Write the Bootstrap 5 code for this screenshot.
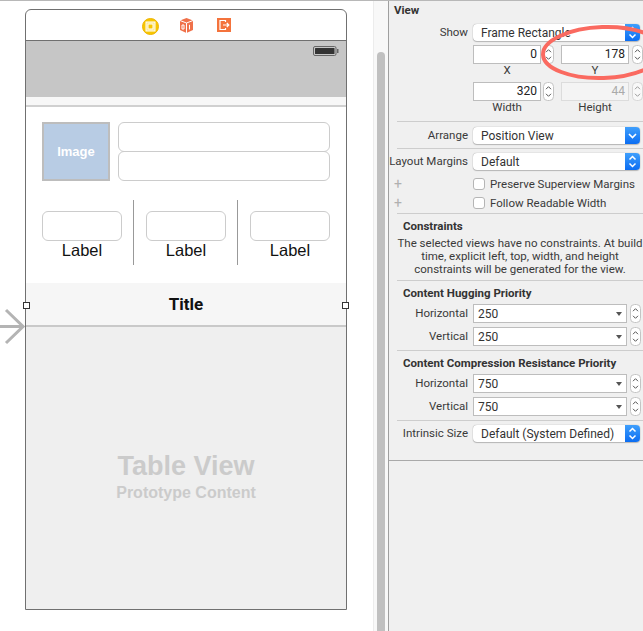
<!DOCTYPE html>
<html lang="en">
<head>
<meta charset="utf-8">
<title>Storyboard</title>
<link href="https://cdn.jsdelivr.net/npm/bootstrap@5.3.0/dist/css/bootstrap.min.css" rel="stylesheet">
<style>
html,body{height:631px;overflow:hidden}
body{background:#fff;border-top:1px solid #b8b8b8;font-family:Roboto,"Liberation Sans",sans-serif;font-size:11.5px;color:#333;position:relative}
.stage{width:373px;flex:none;padding:8px 0 0 25px}
.device{width:322px;height:601px;border:1px solid #707070;border-radius:6px 6px 0 0;position:relative}
.scene-bar{height:31px;border-bottom:1px solid #707070;position:relative}
.scene-ico{position:absolute;top:8px}
.status{height:56px;background:#c6c6c6;position:relative}
.battery{position:absolute;left:287px;top:5px}
.nav-gap{height:8px;background:#f7f7f7}
.nav-line{height:2px;background:#d0d0d0}
.cell{height:176px;padding:15px 16px 0}
.pic{width:68px;height:59px;flex:none;border:2px solid #bdbdbd;outline:0;background:#b8cce4;color:#fff;font:bold 13px "Liberation Sans",sans-serif;box-shadow:inset 0 0 0 0 #fff}
.tf{border:1px solid #ccc;border-radius:6px;background:#fff}
.tf-wide{height:30px}
.tf-wide+.tf-wide{margin-top:-1px}
.trio{margin-top:19px;height:65px}
.trio-item{width:80px;flex:none;padding-top:11px;text-align:center}
.tf-small{height:30px}
.lab{font-family:"Liberation Sans",sans-serif;font-size:16.5px;color:#111;line-height:19px;margin-top:0}
.vsep{width:1px;background:#999;flex:none;margin:0 12px 0 11px}
.vsep+.trio-item{margin-left:0}
.title-bar{height:44px;background:#f6f6f6;border-bottom:2px solid #c9c9c9;font:bold 17px Roboto,"Liberation Sans",sans-serif;color:#111}
.table-area{height:282px;background:#efefef;text-align:center;color:#cbcbcb;font-family:"Liberation Sans",sans-serif;font-weight:bold;padding-top:123px}
.tv1{font-size:27px;line-height:32px}
.tv2{font-size:16px;line-height:20px;margin-top:1px}
.handle{position:absolute;width:7px;height:7px;background:#fff;border:1px solid #333;top:292px}
.entry{position:absolute;left:-26px;top:298px}
.scroll-strip{width:15px;flex:none;background:#f8f8f8;border-left:1px solid #ececec;position:relative;padding:51px 3px 0 3px}
.thumb{width:8px;height:600px;background:#c0c0c0;border-radius:4px 4px 0 0}
.insp{flex:1;background:#f0f0f0;border-left:1px solid #9f9f9f;color:#3a3a3a;height:630px}
.insp-h{font-weight:bold;color:#333;line-height:14px;font-size:11.5px}
.sep{height:1px;background:#cdcdcd;margin:0 3px 0 8px}
.sec{padding-right:3px}
.rw{display:flex;align-items:center}
.rl{width:79px;flex:none;text-align:right;margin-right:5px;white-space:nowrap}
.sel{height:17px;width:167px;flex:none;background:#fff;border-radius:4px;box-shadow:0 0 1px #888,0 1px 1px #bbb;display:flex;align-items:center;padding-left:8px;position:relative;overflow:hidden;font-size:12px;color:#333}
.blue{position:absolute;right:0;top:0;bottom:0;width:15px;background:linear-gradient(#3f9ffc,#0b6df2);display:flex;align-items:center;justify-content:center}
.fld{height:19px;background:#fff;border:1px solid #bdbdbd;text-align:right;padding-right:3px;line-height:17px;font-size:12px;color:#222}
.fld-n{width:68px;flex:none}
.fld-off{border-color:#dcdcdc;color:#aaa;background:#f4f4f4}
.step{width:11px;height:19px;flex:none;margin-left:2px;display:block}
.cap{width:68px;text-align:center;line-height:12px}
.chk{width:12px;height:12px;flex:none;background:#fff;border:1px solid #b5b5b5;border-radius:3px;margin-right:5px}
.plus{color:#b0b0b0;text-align:left;padding-left:5px;font-size:14px;line-height:12px}
.ddf{width:154px;flex:none;height:19px;background:#fff;border:1px solid #bdbdbd;padding-left:4px;display:flex;align-items:center;justify-content:space-between;padding-right:4px;font-size:12px;color:#333;margin-right:1px}
.tri{width:0;height:0;border-left:3.5px solid transparent;border-right:3.5px solid transparent;border-top:4px solid #555}
.note{text-align:center;line-height:13px;margin:4px 0 4px 8px;padding-right:0}
.ring{position:absolute;left:530px;top:15px}
</style>
</head>
<body>
<svg width="0" height="0" class="position-absolute">
  <symbol id="ud" viewBox="0 0 15 17"><path d="M4.5 6.5 7.5 3.5 10.5 6.5M4.5 10.5 7.5 13.5 10.5 10.5" fill="none" stroke="#fff" stroke-width="1.5"/></symbol>
  <symbol id="dn" viewBox="0 0 15 17"><path d="M4 7 7.5 10.5 11 7" fill="none" stroke="#fff" stroke-width="1.6"/></symbol>
  <symbol id="st" viewBox="0 0 11 19"><rect x=".5" y=".5" width="10" height="18" rx="4" fill="#fff" stroke="#c4c4c4"/><path d="M3 7.2 5.5 4.7 8 7.2M3 11.8 5.5 14.3 8 11.8" fill="none" stroke="#555" stroke-width="1"/></symbol>
</svg>
<div class="d-flex">
  <div class="stage">
    <div class="device">
      <div class="scene-bar">
        <svg class="scene-ico" style="left:116px" width="17" height="17" viewBox="0 0 17 17"><circle cx="8.5" cy="8.5" r="8" fill="#f7c600"/><circle cx="8.5" cy="8.5" r="8" fill="none" stroke="#eeb400"/><rect x="4" y="4" width="9" height="9" fill="#fbe27a" stroke="#fff" stroke-width="1"/><rect x="6" y="6" width="5" height="5" fill="#f7c600" stroke="#fff" stroke-width="1"/></svg>
        <svg class="scene-ico" style="left:153px" width="15" height="15" viewBox="0 0 15 15"><path d="M7.5 0 14 2.5V12L7.5 15 1 12V2.5Z" fill="#f0714a"/><path d="M1 2.5 7.5 5 14 2.5M7.5 5V15" fill="none" stroke="#fff" stroke-width="1"/><path d="M3 7h2v4H3ZM10.5 6.8V11.5" fill="none" stroke="#fff" stroke-width="1"/></svg>
        <svg class="scene-ico" style="left:191px" width="14" height="14" viewBox="0 0 14 14"><rect width="14" height="14" fill="#f4733c"/><path d="M8.5 4V2.5H3V11.5H8.5V10" fill="none" stroke="#fff" stroke-width="1.2"/><path d="M6 7H11.5M9.8 5 11.8 7 9.8 9" fill="none" stroke="#fff" stroke-width="1.2"/></svg>
      </div>
      <div class="status">
        <svg class="battery" width="26" height="10" viewBox="0 0 26 10"><rect x=".5" y=".5" width="22.5" height="9" rx="1.5" fill="#c6c6c6" stroke="#666"/><rect x="2" y="2" width="19.5" height="6" rx=".5" fill="#333"/><rect x="24" y="3" width="1.5" height="4" fill="#666"/></svg>
      </div>
      <div class="nav-gap"></div>
      <div class="nav-line"></div>
      <div class="cell">
        <div class="d-flex">
          <div class="pic d-flex align-items-center justify-content-center">Image</div>
          <div class="flex-grow-1 ms-2">
            <div class="tf tf-wide"></div>
            <div class="tf tf-wide"></div>
          </div>
        </div>
        <div class="trio d-flex">
          <div class="trio-item"><div class="tf tf-small"></div><div class="lab">Label</div></div>
          <div class="vsep"></div>
          <div class="trio-item"><div class="tf tf-small"></div><div class="lab">Label</div></div>
          <div class="vsep"></div>
          <div class="trio-item"><div class="tf tf-small"></div><div class="lab">Label</div></div>
        </div>
      </div>
      <div class="title-bar d-flex align-items-center justify-content-center">Title</div>
      <div class="table-area">
        <div class="tv1">Table View</div>
        <div class="tv2">Prototype Content</div>
      </div>
      <span class="handle" style="left:-3px"></span>
      <span class="handle" style="left:316px"></span>
      <svg class="entry" width="25" height="38" viewBox="0 0 25 38"><path d="M0 18.5H22M6 2 23 18.5 6 35" fill="none" stroke="#b4b4b4" stroke-width="3"/></svg>
    </div>
  </div>
  <div class="scroll-strip"><div class="thumb"></div></div>
  <div class="insp">
    <div class="sec" style="height:120px">
      <div class="insp-h" style="padding:2px 0 0 5px">View</div>
      <div class="rw" style="margin-top:7px"><div class="rl">Show</div><div class="sel">Frame Rectangle<span class="blue"><svg width="15" height="17"><use href="#ud"/></svg></span></div></div>
      <div class="rw" style="margin-top:4px;margin-left:84px">
        <div class="fld fld-n">0</div><svg class="step"><use href="#st"/></svg>
        <div class="fld fld-n" style="margin-left:7px">178</div><svg class="step" style="margin-left:3px"><use href="#st"/></svg>
      </div>
      <div class="d-flex" style="margin-left:84px"><div class="cap">X</div><div class="cap" style="margin-left:20px">Y</div></div>
      <div class="rw" style="margin-top:6px;margin-left:84px">
        <div class="fld fld-n">320</div><svg class="step"><use href="#st"/></svg>
        <div class="fld fld-n fld-off" style="margin-left:7px">44</div><svg class="step" style="margin-left:3px;opacity:.55"><use href="#st"/></svg>
      </div>
      <div class="d-flex" style="margin-left:84px"><div class="cap">Width</div><div class="cap" style="margin-left:20px">Height</div></div>
    </div>
    <div class="sep"></div>
    <div class="sec" style="height:26px;padding-top:5px">
      <div class="rw"><div class="rl">Arrange</div><div class="sel">Position View<span class="blue"><svg width="15" height="17"><use href="#dn"/></svg></span></div></div>
    </div>
    <div class="sep"></div>
    <div class="sec" style="height:64px;padding-top:4px">
      <div class="rw"><div class="rl">Layout Margins</div><div class="sel">Default<span class="blue"><svg width="15" height="17"><use href="#ud"/></svg></span></div></div>
      <div class="rw" style="margin-top:8px;height:12px"><div class="rl plus">+</div><span class="chk"></span><span class="text-nowrap">Preserve Superview Margins</span></div>
      <div class="rw" style="margin-top:7px;height:12px"><div class="rl plus">+</div><span class="chk"></span><span>Follow Readable Width</span></div>
    </div>
    <div class="sep"></div>
    <div class="sec" style="height:66px;padding-top:5px">
      <div class="insp-h" style="padding-left:14px">Constraints</div>
      <div class="note">The selected views have no constraints. At build<br>time, explicit left, top, width, and height<br>constraints will be generated for the view.</div>
    </div>
    <div class="sep"></div>
    <div class="sec" style="height:69px;padding-top:5px">
      <div class="insp-h" style="padding-left:14px">Content Hugging Priority</div>
      <div class="rw" style="margin-top:4px"><div class="rl">Horizontal</div><div class="ddf">250<span class="tri"></span></div><svg class="step"><use href="#st"/></svg></div>
      <div class="rw" style="margin-top:4px"><div class="rl">Vertical</div><div class="ddf">250<span class="tri"></span></div><svg class="step"><use href="#st"/></svg></div>
    </div>
    <div class="sep"></div>
    <div class="sec" style="height:69px;padding-top:5px">
      <div class="insp-h" style="padding-left:14px">Content Compression Resistance Priority</div>
      <div class="rw" style="margin-top:4px"><div class="rl">Horizontal</div><div class="ddf">750<span class="tri"></span></div><svg class="step"><use href="#st"/></svg></div>
      <div class="rw" style="margin-top:4px"><div class="rl">Vertical</div><div class="ddf">750<span class="tri"></span></div><svg class="step"><use href="#st"/></svg></div>
    </div>
    <div class="sep"></div>
    <div class="sec" style="height:39px;padding-top:4px">
      <div class="rw"><div class="rl">Intrinsic Size</div><div class="sel">Default (System Defined)<span class="blue"><svg width="15" height="17"><use href="#ud"/></svg></span></div></div>
    </div>
    <div style="height:1px;background:#a9a9a9"></div>
  </div>
</div>
<svg class="ring" width="113" height="72" viewBox="530 15 113 72"><ellipse cx="603" cy="51.5" rx="60" ry="25.5" transform="rotate(-2 603 51.5)" fill="none" stroke="#fa6a60" stroke-width="4"/></svg>
<script src="https://cdn.jsdelivr.net/npm/bootstrap@5.3.0/dist/js/bootstrap.bundle.min.js"></script>
</body>
</html>
